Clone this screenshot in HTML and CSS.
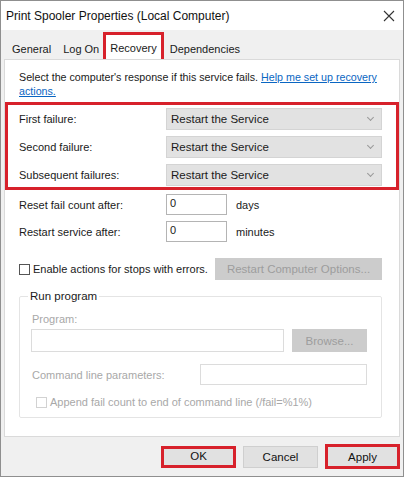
FILE: index.html
```html
<!DOCTYPE html>
<html lang="en">
<head>
  <meta charset="UTF-8">
  <meta name="viewport" content="width=device-width, initial-scale=1.0">
  <title>Print Spooler Properties</title>
  <link rel="stylesheet" href="styles.css">
</head>
<body>
  <div class="window">
    <div class="titlebar">
      <span class="title">Print Spooler Properties (Local Computer)</span>
      <svg class="close" width="12" height="12" viewBox="0 0 12 12">
        <path d="M1 1 L11 11 M11 1 L1 11" stroke="#333" stroke-width="1.1" fill="none"/>
      </svg>
    </div>

    <div class="tabstrip">
      <div class="tab">General</div>
      <div class="tab">Log On</div>
      <div class="tab active">Recovery</div>
      <div class="tab">Dependencies</div>
    </div>

    <div class="panel">
      <p class="intro">Select the computer's response if this service fails. <a href="#">Help me set up recovery<br>actions.</a></p>

      <div class="failures">
        <div class="field">
          <label>First failure:</label>
          <div class="select">Restart the Service<span class="chev"></span></div>
        </div>
        <div class="field">
          <label>Second failure:</label>
          <div class="select">Restart the Service<span class="chev"></span></div>
        </div>
        <div class="field">
          <label>Subsequent failures:</label>
          <div class="select">Restart the Service<span class="chev"></span></div>
        </div>
      </div>

      <div class="field counter">
        <label>Reset fail count after:</label>
        <div class="box small">0</div>
        <span class="unit">days</span>
      </div>
      <div class="field counter">
        <label>Restart service after:</label>
        <div class="box small">0</div>
        <span class="unit">minutes</span>
      </div>

      <div class="stops">
        <label class="check"><span class="checkbox"></span>Enable actions for stops with errors.</label>
        <button class="btn disabled wide">Restart Computer Options...</button>
      </div>

      <fieldset class="group">
        <legend>Run program</legend>
        <div class="muted">Program:</div>
        <div class="program">
          <div class="box long"></div>
          <button class="btn disabled browse">Browse...</button>
        </div>
        <div class="params">
          <span class="muted">Command line parameters:</span>
          <div class="box params-box"></div>
        </div>
        <label class="check muted append"><span class="checkbox faint"></span>Append fail count to end of command line (/fail=%1%)</label>
      </fieldset>
    </div>

    <div class="footer">
      <button class="btn marked ok">OK</button>
      <button class="btn">Cancel</button>
      <button class="btn marked apply">Apply</button>
    </div>
  </div>
</body>
</html>
```

FILE: styles.css
```css
body {
  margin: 0;
  font-family: 'Liberation Sans', Arial, sans-serif;
  font-size: 11px;
  color: #1a1a1a;
  background-color: #fff;
}
.window {
  width: 404px;
  height: 477px;
  box-sizing: border-box;
  border: 1px solid #8f8f8f;
  background-color: #f0f0f0;
  display: flex;
  flex-direction: column;
}
.titlebar {
  height: 29px;
  background-color: #fff;
  display: flex;
  align-items: center;
  justify-content: space-between;
  padding: 0 8px 0 5px;
}
.title {
  font-size: 12px;
  color: #111;
}
.tabstrip {
  height: 29px;
  display: flex;
  align-items: flex-end;
  padding-left: 6px;
}
.tab {
  height: 20px;
  line-height: 20px;
  padding: 0 5px;
}
.tab:first-child {
  margin-right: 2px;
}
.tab.active {
  height: 24px;
  line-height: 26px;
  background-color: #fff;
  border: 3px solid #d7212b;
  border-bottom: none;
  padding: 0 4px;
  margin: 0 1px 0 -1px;
}
.panel {
  height: 378px;
  margin: 0 3px;
  background-color: #fff;
  border: 1px solid #dadada;
  box-sizing: border-box;
  padding-top: 10px;
}
.intro {
  margin: 0 0 4px 14px;
  line-height: 14px;
  font-size: 10.7px;
}
.intro a {
  color: #0a66c2;
}
.failures {
  border: 3px solid #d7212b;
  padding: 3px 13px 1px 11px;
  display: flex;
  flex-direction: column;
  gap: 6px;
}
.field {
  display: flex;
  align-items: center;
}
.field label {
  width: 147px;
  flex: none;
}
.select {
  width: 216px;
  height: 22px;
  box-sizing: border-box;
  background-color: #e2e2e2;
  border: 1px solid #d4d4d4;
  display: flex;
  align-items: center;
  justify-content: space-between;
  padding: 0 8px 0 4px;
  font-size: 11.5px;
}
.chev {
  width: 4px;
  height: 4px;
  border-right: 1px solid #999;
  border-bottom: 1px solid #999;
  transform: rotate(45deg);
  margin-top: -3px;
}
.counter {
  padding-left: 14px;
  margin-top: 4px;
}
.counter + .counter {
  margin-top: 6px;
}
.box {
  height: 21px;
  box-sizing: border-box;
  border: 1px solid #b4b4b4;
  background-color: #fff;
  padding: 2px 3px;
}
.box.small {
  width: 61px;
}
.unit {
  margin-left: 9px;
}
.stops {
  display: flex;
  align-items: center;
  justify-content: space-between;
  margin: 16px 17px 0 14px;
}
.check {
  display: flex;
  align-items: center;
  gap: 3px;
}
.checkbox {
  width: 9px;
  height: 9px;
  border: 1px solid #555;
  background-color: #fff;
}
.checkbox.faint {
  border-color: #d2d2d2;
}
.btn {
  font-family: inherit;
  font-size: 11.5px;
  height: 22px;
  width: 75px;
  background-color: #e1e1e1;
  border: 1px solid #cfcfcf;
  color: #111;
  padding: 0;
}
.btn.disabled {
  background-color: #cccccc;
  border-color: #cccccc;
  color: #9d9d9d;
}
.btn.wide {
  width: 167px;
}
.group {
  margin: 10px 17px 0 14px;
  border: 1px solid #e4e4e4;
  border-radius: 2px;
  padding: 0 14px 0 11px;
  height: 128px;
  box-sizing: border-box;
}
.group legend {
  padding: 0 2px;
  margin-left: -3px;
  font-size: 11.5px;
}
.muted {
  color: #a8a8a8;
}
.group > .muted {
  margin-top: 11px;
  margin-left: 1px;
}
.program {
  display: flex;
  justify-content: space-between;
  margin-top: 4px;
}
.box.long {
  width: 253px;
  height: 23px;
  border-color: #dcdcdc;
}
.btn.browse {
  height: 23px;
}
.params {
  display: flex;
  align-items: center;
  justify-content: space-between;
  margin-top: 12px;
  padding-left: 1px;
}
.box.params-box {
  width: 167px;
  border-color: #dcdcdc;
}
.append {
  margin-top: 11px;
  padding-left: 4px;
}
.footer {
  flex: 1;
  display: flex;
  justify-content: flex-end;
  align-items: center;
  gap: 7px;
  padding-right: 3px;
}
.btn.marked {
  outline: 3px solid #d7212b;
  outline-offset: -3px;
}
.btn.ok {
  border-bottom: 2px solid #3f7fd9;
}
.btn.apply {
  height: 25px;
}
```
